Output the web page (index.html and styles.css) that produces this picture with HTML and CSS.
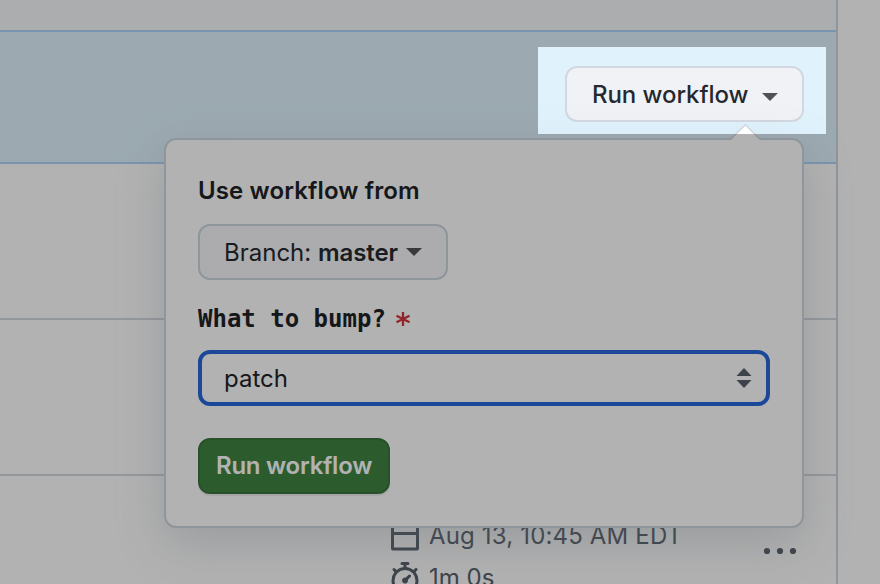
FILE: index.html
```html
<!DOCTYPE html>
<html lang="en">
<head>
<meta charset="utf-8">
<title>Run workflow</title>
<link rel="stylesheet" href="styles.css">
</head>
<body>
<div class="page">
  <main class="runs">
    <div class="row row-head"></div>
    <div class="row row-dispatch">
      <button class="btn btn-run"><span class="label">Run workflow</span><svg class="caret" width="16" height="8" viewBox="0 0 16 8"><path d="M0 0h16L8 8z"/></svg></button>
    </div>
    <div class="row"></div>
    <div class="row"></div>
    <div class="row row-last">
      <div class="meta">
        <div class="meta-line">
          <svg class="icon" width="32" height="32" viewBox="0 0 16 16"><path fill-rule="evenodd" d="M4.75 0a.75.75 0 0 1 .75.75V2h5V.75a.75.75 0 0 1 1.5 0V2h1.25c.97 0 1.75.78 1.75 1.75v10.500a1 1 0 0 1-1 1H2a1 1 0 0 1-1-1V3.750C1 2.780 1.780 2 2.750 2H4V.75A.75.75 0 0 1 4.750 0zM2.500 7.500v6.250h11V7.500zm0-1.500h11V3.500h-11z"/></svg>
          <span class="date">Aug 13, 10:45 AM EDT</span>
        </div>
        <div class="meta-line">
          <svg class="icon" width="32" height="32" viewBox="0 0 16 16"><path fill-rule="evenodd" d="M5.75.75A.75.75 0 0 1 6.5 0h3a.75.75 0 0 1 0 1.500h-.75v1l-.001.041a6.720 6.720 0 0 1 3.464 1.435l.007-.006.750-.750a.75.75 0 1 1 1.060 1.060l-.75.75-.006.007a6.750 6.750 0 1 1-10.548 0L2.720 5.030l-.75-.75a.75.75 0 0 1 1.060-1.060l.75.75.007.006A6.720 6.720 0 0 1 7.250 2.541V1.500H6.500a.75.75 0 0 1-.75-.75zM8 14.500A5.250 5.250 0 1 0 8 4a5.250 5.250 0 0 0 0 10.500zm.389-6.700 1.330-1.330a.75.75 0 1 1 1.061 1.060L9.450 8.861A1.500 1.500 0 1 1 8.389 7.800z"/></svg>
          <span class="duration">1m 0s</span>
        </div>
      </div>
      <svg class="dots" width="34" height="8" viewBox="0 0 34 8"><circle cx="4" cy="4" r="3.100"/><circle cx="17" cy="4" r="3.100"/><circle cx="30" cy="4" r="3.100"/></svg>
    </div>
  </main>
  <section class="popover">
    <svg class="arrow" width="32" height="16" viewBox="0 0 32 16"><path class="arrow-fill" d="M1 16 15.500 1.500 30 16z"/><path class="arrow-line" d="M1 14.500 15.500 0.800 29 14.500"/></svg>
    <div class="title">Use workflow from</div>
    <button class="btn btn-branch"><span class="label">Branch: <b>master</b></span><svg class="caret" width="16" height="8" viewBox="0 0 16 8"><path d="M0 0h16L8 8z"/></svg></button>
    <div class="question"><span class="label">What to bump?</span><svg class="required" width="16" height="16" viewBox="0 0 16 16"><path d="M8 1v14M1.500 4.700l13 6.600M14.500 4.700l-13 6.600"/></svg></div>
    <div class="select"><span class="label">patch</span><svg class="sort" width="16" height="20" viewBox="0 0 16 20"><path d="M.5 8 8 0l7.500 8zM.5 12h15L8 20z"/></svg></div>
    <button class="btn btn-primary">Run workflow</button>
  </section>
  <div class="spotlight"></div>
</div>
</body>
</html>
```
FILE: styles.css
```css
* { box-sizing: border-box; }
body {
  margin: 0;
  overflow: hidden;
  background: #fff;
  color: #1f2328;
  font: 400 24px/36px Inter, "Liberation Sans", sans-serif;
}
.page {
  position: relative;
  width: 880px;
  height: 584px;
  overflow: hidden;
}
.runs {
  width: 838px;
  height: 584px;
  border-right: 2px solid #ccd6de;
}
.row { height: 156px; border-bottom: 2px solid #d3d9df; }
.row-head {
  height: 32px;
  background: #f7f8fa;
  border-color: #add5fb;
}
.row-dispatch {
  height: 132px;
  padding: 34px 32px 0 0;
  display: flex;
  justify-content: flex-end;
  align-items: flex-start;
  background: #e0f3fd;
  border-color: #add5fb;
}
.row-last {
  height: 108px;
  border: 0;
  display: flex;
  justify-content: space-between;
  padding: 42px 39px 0 389px;
  color: #57606a;
}
.meta { display: flex; flex-direction: column; gap: 6px; }
.meta-line { display: flex; gap: 8px; height: 36px; white-space: nowrap; }
.date { letter-spacing: .16px; }
.icon, .dots { fill: #57606a; flex: none; }
.icon { margin-top: 2px; }
.dots { margin-top: 29px; }
.label { padding-top: 2px; }
.btn {
  display: flex;
  align-items: center;
  height: 56px;
  padding: 0 24px;
  border: 2px solid #d3d7df;
  border-radius: 12px;
  background: #f1f2f6;
  color: #24292f;
  font: inherit;
  white-space: nowrap;
}
.caret { fill: #505258; flex: none; }
.btn-run {
  width: 239px;
  font-weight: 500;
  letter-spacing: -.06px;
  justify-content: space-between;
  padding-left: 25px;
}
.btn-run .caret { margin-top: 5px; }
.popover {
  position: absolute;
  left: 164px;
  top: 138px;
  width: 640px;
  height: 390px;
  padding: 32px;
  border: 2px solid #ccd6de;
  border-radius: 12px;
  background: #fff;
  box-shadow: 0 16px 48px rgba(140, 149, 159, .3);
}
.arrow { position: absolute; right: 40px; top: -16px; }
.arrow-fill { fill: #fff; }
.arrow-line { fill: none; stroke: #d0d7de; stroke-width: 1.500; }
.title { font-weight: 600; height: 52px; padding-top: 1px; letter-spacing: .13px; }
.btn-branch {
  width: 250px;
  justify-content: space-between;
  background: #f6f7fa;
  border-color: #ccd6de;
}
.btn-branch b { font-weight: 600; letter-spacing: -.1px; }
.question {
  display: flex;
  align-items: center;
  height: 36px;
  margin: 20px 0 14px;
  font: 700 24px/36px "DejaVu Sans Mono", monospace;
}
.required {
  margin: 2px 0 0 9px;
  fill: none;
  stroke: #d1353b;
  stroke-width: 2.300;
}
.select {
  display: flex;
  align-items: center;
  justify-content: space-between;
  width: 572px;
  height: 56px;
  padding: 0 14px 0 22px;
  border: 4px solid #2968db;
  border-radius: 12px;
}
.sort { fill: #57606a; }
.btn-primary {
  width: 192px;
  margin-top: 32px;
  padding: 0 16px;
  border-color: #3a753d;
  background: #408542;
  color: #fff;
  font-weight: 600;
  letter-spacing: -.25px;
  box-shadow: 0 2px 0 rgba(27, 31, 36, .08);
}
.spotlight {
  position: absolute;
  left: 538px;
  top: 47px;
  width: 288px;
  height: 87px;
  box-shadow: 0 0 0 900px rgba(0, 0, 0, .3);
  pointer-events: none;
}
```
